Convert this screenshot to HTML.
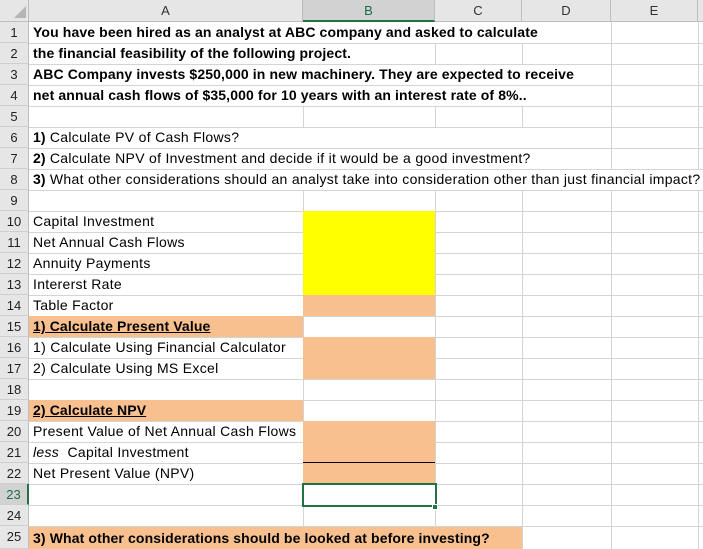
<!DOCTYPE html><html><head><style>
body{margin:0;width:703px;height:549px;overflow:hidden;background:#fff;font-family:"Liberation Sans",sans-serif;position:relative}
div{position:absolute;box-sizing:border-box}
.h{background:#e6e6e6;color:#333;font-size:13px;text-align:center;line-height:22px;top:0;height:22px;border-right:1px solid #bdbdbd;border-bottom:1px solid #bdbdbd}
.rn{left:0;width:29px;height:21px;background:#e6e6e6;color:#222;font-size:13px;text-align:center;line-height:21px;border-right:1px solid #bdbdbd;border-bottom:1px solid #cfcfcf;z-index:4}
.vl{width:1px;background:#d4d4d4}
.hl{left:29px;right:0;height:1px;background:#d4d4d4}
.t{left:33px;font-size:14px;line-height:21px;white-space:nowrap;color:#000;z-index:5;letter-spacing:0.3px}
.b{font-weight:bold;letter-spacing:0.12px}
.t b{letter-spacing:0.12px}
.f{background:#f8c08f}.y{background:#ffff00}
.w{background:#fff;z-index:1}
</style></head><body>
<div class="h" style="left:0;width:29px"></div>
<div style="left:14px;top:6px;width:0;height:0;border-left:12px solid transparent;border-bottom:12px solid #b5b5b5"></div>
<div class="h" style="left:29px;width:274px">A</div>
<div class="h" style="left:303px;width:132px;background:#d2d2d2;color:#1e6b41;border-bottom:2px solid #217346">B</div>
<div class="h" style="left:435px;width:87px">C</div>
<div class="h" style="left:522px;width:89px">D</div>
<div class="h" style="left:611px;width:87px">E</div>
<div class="h" style="left:698px;width:5px;border-right:0"></div>

<div class="vl" style="left:303px;top:22px;bottom:0"></div>
<div class="vl" style="left:435px;top:22px;bottom:0"></div>
<div class="vl" style="left:522px;top:22px;bottom:0"></div>
<div class="vl" style="left:611px;top:22px;bottom:0"></div>
<div class="vl" style="left:698px;top:22px;bottom:0"></div>

<div class="hl" style="top:43px"></div><div class="hl" style="top:64px"></div><div class="hl" style="top:85px"></div><div class="hl" style="top:106px"></div><div class="hl" style="top:127px"></div><div class="hl" style="top:148px"></div><div class="hl" style="top:169px"></div><div class="hl" style="top:190px"></div><div class="hl" style="top:211px"></div><div class="hl" style="top:232px"></div><div class="hl" style="top:253px"></div><div class="hl" style="top:274px"></div><div class="hl" style="top:295px"></div><div class="hl" style="top:316px"></div><div class="hl" style="top:337px"></div><div class="hl" style="top:358px"></div><div class="hl" style="top:379px"></div><div class="hl" style="top:400px"></div><div class="hl" style="top:421px"></div><div class="hl" style="top:442px"></div><div class="hl" style="top:463px"></div><div class="hl" style="top:484px"></div><div class="hl" style="top:505px"></div><div class="hl" style="top:526px"></div>

<div class="w" style="left:303px;top:22px;width:308px;height:21px"></div>
<div class="w" style="left:303px;top:44px;width:132px;height:20px"></div>
<div class="w" style="left:303px;top:65px;width:308px;height:20px"></div>
<div class="w" style="left:303px;top:86px;width:308px;height:20px"></div>
<div class="w" style="left:303px;top:128px;width:308px;height:20px"></div>
<div class="w" style="left:303px;top:149px;width:308px;height:20px"></div>
<div class="w" style="left:303px;top:170px;width:400px;height:20px"></div>

<div class="y" style="left:303px;top:211px;width:132px;height:84px;z-index:2"></div>
<div class="f" style="left:303px;top:295px;width:132px;height:21px;z-index:2"></div>
<div class="f" style="left:29px;top:316px;width:274px;height:21px;z-index:2"></div>
<div class="f" style="left:303px;top:337px;width:132px;height:42px;z-index:2"></div>
<div class="f" style="left:29px;top:400px;width:274px;height:21px;z-index:2"></div>
<div class="f" style="left:303px;top:421px;width:132px;height:63px;z-index:2"></div>
<div class="f" style="left:29px;top:527px;width:493px;height:22px;z-index:2"></div>
<div style="left:303px;top:462px;width:132px;height:1px;background:#000;z-index:3"></div>

<div class="rn" style="top:22px">1</div><div class="rn" style="top:43px">2</div><div class="rn" style="top:64px">3</div><div class="rn" style="top:85px">4</div><div class="rn" style="top:106px">5</div><div class="rn" style="top:127px">6</div><div class="rn" style="top:148px">7</div><div class="rn" style="top:169px">8</div><div class="rn" style="top:190px">9</div><div class="rn" style="top:211px">10</div><div class="rn" style="top:232px">11</div><div class="rn" style="top:253px">12</div><div class="rn" style="top:274px">13</div><div class="rn" style="top:295px">14</div><div class="rn" style="top:316px">15</div><div class="rn" style="top:337px">16</div><div class="rn" style="top:358px">17</div><div class="rn" style="top:379px">18</div><div class="rn" style="top:400px">19</div><div class="rn" style="top:421px">20</div><div class="rn" style="top:442px">21</div><div class="rn" style="top:463px">22</div><div class="rn" style="top:484px;background:#d2d2d2;color:#1e6b41;border-right:2px solid #217346">23</div><div class="rn" style="top:505px">24</div><div class="rn" style="top:526px;height:23px">25</div>

<div class="t b" style="top:22px">You have been hired as an analyst at ABC company and asked to calculate</div>
<div class="t b" style="top:43px">the financial feasibility of the following project.</div>
<div class="t b" style="top:64px">ABC Company invests $250,000 in new machinery. They are expected to receive</div>
<div class="t b" style="top:85px">net annual cash flows of $35,000 for 10 years with an interest rate of 8%..</div>
<div class="t" style="top:127px"><b>1)</b> Calculate PV of Cash Flows?</div>
<div class="t" style="top:148px"><b>2)</b> Calculate NPV of Investment and decide if it would be a good investment?</div>
<div class="t" style="top:169px"><b>3)</b> What other considerations should an analyst take into consideration other than just financial impact?</div>
<div class="t" style="top:211px">Capital Investment</div>
<div class="t" style="top:232px">Net Annual Cash Flows</div>
<div class="t" style="top:253px">Annuity Payments</div>
<div class="t" style="top:274px">Intererst Rate</div>
<div class="t" style="top:295px">Table Factor</div>
<div class="t b" style="top:316px"><u>1) Calculate Present Value</u></div>
<div class="t" style="top:337px">1) Calculate Using Financial Calculator</div>
<div class="t" style="top:358px">2) Calculate Using MS Excel</div>
<div class="t b" style="top:400px"><u>2) Calculate NPV</u></div>
<div class="t" style="top:421px">Present Value of Net Annual Cash Flows</div>
<div class="t" style="top:442px"><i>less</i>&nbsp; Capital Investment</div>
<div class="t" style="top:463px">Net Present Value (NPV)</div>
<div class="t b" style="top:528px">3) What other considerations should be looked at before investing?</div>

<div style="left:302px;top:483px;width:135px;height:24px;border:2px solid #217346;z-index:6"></div>
<div style="left:432px;top:504px;width:6px;height:6px;background:#217346;border:1px solid #fff;z-index:7"></div>
</body></html>
